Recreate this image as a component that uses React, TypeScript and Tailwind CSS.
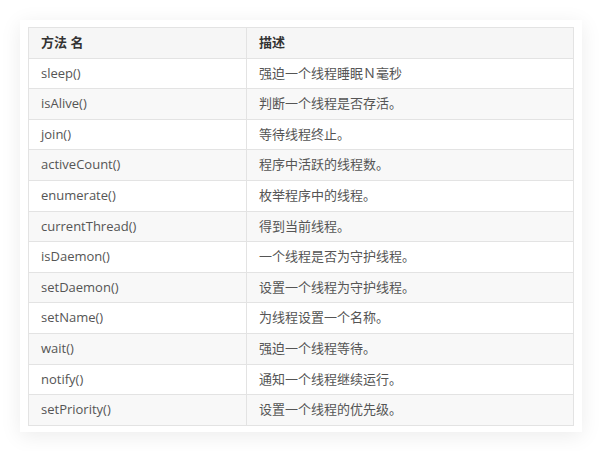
import React from "react";

const rows: [string, string][] = [
  ["sleep()", "强迫一个线程睡眠Ｎ毫秒"],
  ["isAlive()", "判断一个线程是否存活。"],
  ["join()", "等待线程终止。"],
  ["activeCount()", "程序中活跃的线程数。"],
  ["enumerate()", "枚举程序中的线程。"],
  ["currentThread()", "得到当前线程。"],
  ["isDaemon()", "一个线程是否为守护线程。"],
  ["setDaemon()", "设置一个线程为守护线程。"],
  ["setName()", "为线程设置一个名称。"],
  ["wait()", "强迫一个线程等待。"],
  ["notify()", "通知一个线程继续运行。"],
  ["setPriority()", "设置一个线程的优先级。"],
];

export default function App() {
  return (
    <div className="w-[602px] h-[451px] bg-white p-5 font-['Open_Sans','Noto_Sans_CJK_SC',sans-serif]">
      <div className="w-[562px] bg-white pt-[7px] px-2 pb-[6px] shadow-[0_4px_20px_rgba(0,0,0,0.08)]">
        <table className="w-full border-collapse text-[13px] leading-[19.6px] text-[#555]">
          <thead>
            <tr className="bg-[#f6f6f6]">
              <th className="w-[218px] border border-[#e3e3e3] px-3 py-[5px] text-left font-bold text-[#333]">
                方法 名
              </th>
              <th className="border border-[#e3e3e3] px-3 py-[5px] text-left font-bold text-[#333]">
                描述
              </th>
            </tr>
          </thead>
          <tbody>
            {rows.map(([name, desc], i) => (
              <tr key={name} className={i % 2 === 1 ? "bg-[#f8f8f8]" : "bg-white"}>
                <td className="border border-[#e3e3e3] px-3 py-[5px]">{name}</td>
                <td className="border border-[#e3e3e3] px-3 py-[5px]">{desc}</td>
              </tr>
            ))}
          </tbody>
        </table>
      </div>
    </div>
  );
}
